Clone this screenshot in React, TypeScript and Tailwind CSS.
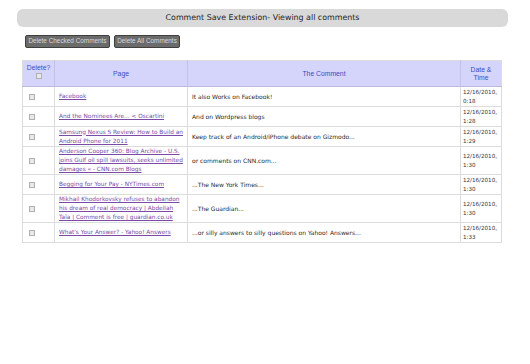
import React from "react";

interface Comment {
  id: number;
  page: string;
  text: string;
  date: string;
  time: string;
}

const comments: Comment[] = [
  { id: 1, page: "Facebook", text: "It also Works on Facebook!", date: "12/16/2010,", time: "0:18" },
  { id: 2, page: "And the Nominees Are... < Oscartini", text: "And on Wordpress blogs", date: "12/16/2010,", time: "1:28" },
  {
    id: 3,
    page: "Samsung Nexus S Review: How to Build an Android Phone for 2011",
    text: "Keep track of an Android/iPhone debate on Gizmodo...",
    date: "12/16/2010,",
    time: "1:29",
  },
  {
    id: 4,
    page: "Anderson Cooper 360: Blog Archive - U.S. joins Gulf oil spill lawsuits, seeks unlimited damages « - CNN.com Blogs",
    text: "or comments on CNN.com...",
    date: "12/16/2010,",
    time: "1:30",
  },
  { id: 5, page: "Begging for Your Pay - NYTimes.com", text: "...The New York Times...", date: "12/16/2010,", time: "1:30" },
  {
    id: 6,
    page: "Mikhail Khodorkovsky refuses to abandon his dream of real democracy | Abdellah Taïa | Comment is free | guardian.co.uk",
    text: "...The Guardian...",
    date: "12/16/2010,",
    time: "1:30",
  },
  {
    id: 7,
    page: "What's Your Answer? - Yahoo! Answers",
    text: "...or silly answers to silly questions on Yahoo! Answers...",
    date: "12/16/2010,",
    time: "1:33",
  },
];

function Box() {
  return <span className="block w-[6px] h-[6px] border border-[#b0b0b0] bg-[#e8e8e8]" />;
}

export default function App() {
  return (
    <div className="w-[530px] h-[364px] bg-white pt-[9px] font-['DejaVu_Sans',Verdana,sans-serif]">
      {/* title bar */}
      <div className="ml-[17px] w-[491px] h-[18px] rounded-[6px] bg-[#d9d9d9] flex items-center justify-center text-[7.9px] text-[#1e1e1e]">
        Comment Save Extension- Viewing all comments
      </div>

      {/* buttons */}
      <div className="ml-[25px] mt-[8px] flex gap-[4px] font-['Liberation_Sans',Arial,sans-serif]">
        <button className="h-[13px] w-[85px] rounded-[2px] border border-[#3f3f3f] bg-[#6b6b6b] text-[6.4px] text-[#dadada] leading-none">
          Delete Checked Comments
        </button>
        <button className="h-[13px] w-[66px] rounded-[2px] border border-[#3f3f3f] bg-[#6b6b6b] text-[6.4px] text-[#dadada] leading-none">
          Delete All Comments
        </button>
      </div>

      {/* comments table */}
      <table className="ml-[22px] mt-[12px] w-[479px] table-fixed border-collapse border border-[#dcdcdc]">
        <colgroup>
          <col className="w-[32px]" />
          <col className="w-[133px]" />
          <col className="w-[273px]" />
          <col className="w-[41px]" />
        </colgroup>
        <thead>
          <tr className="h-[26px] bg-[#d5d5fb] text-[#3b4cc0] font-['Liberation_Sans',Arial,sans-serif] text-[6.8px] leading-[8px] border-b border-[#b9b9dc]">
            <th className="font-normal align-top pt-[3px] border-r border-[#c2c2e6]">
              <div>Delete?</div>
              <div className="mt-[1px] flex justify-center">
                <Box />
              </div>
            </th>
            <th className="font-normal border-r border-[#c2c2e6]">Page</th>
            <th className="font-normal border-r border-[#c2c2e6]">The Comment</th>
            <th className="font-normal">
              Date &amp;
              <br />
              Time
            </th>
          </tr>
        </thead>
        <tbody>
          {comments.map((c) => (
            <tr key={c.id} className="border-b border-[#dcdcdc]">
              <td className="align-middle pl-[6px] border-r border-[#dcdcdc]">
                <Box />
              </td>
              <td className="align-middle pl-[4px] pr-[2px] border-r border-[#dcdcdc] text-[5.8px] leading-[9px]">
                <a className="text-[#7a4aa6] underline">{c.page}</a>
              </td>
              <td className="align-middle pl-[4px] text-[#2a2a2a] border-r border-[#dcdcdc] text-[6px] leading-[9px]">
                {c.text}
              </td>
              <td className="align-middle pl-[2px] text-[#333] text-[5.6px] leading-[9px] h-[20px]">
                {c.date}
                <br />
                {c.time}
              </td>
            </tr>
          ))}
        </tbody>
      </table>
    </div>
  );
}
